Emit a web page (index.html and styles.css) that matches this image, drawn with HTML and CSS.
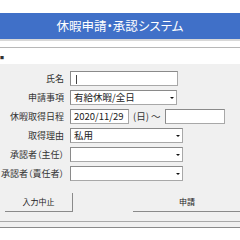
FILE: index.html
```html
<!DOCTYPE html>
<html lang="ja">
<head>
<meta charset="utf-8">
<link rel="stylesheet" href="styles.css">
</head>
<body>
<div class="page">
  <div class="topgap"></div>
  <div class="header"><span class="title">休暇申請・承認システム</span></div>
  <div class="band">
    <div class="band-line"></div>
    <div class="band-cap">■</div>
  </div>
  <div class="form">
    <div class="rows">
      <div class="label">氏名</div>
      <div class="field w108"><span class="caret"></span></div>

      <div class="label">申請事項</div>
      <div class="field w107 combo">有給休暇/全日<span class="arrow"></span></div>

      <div class="label">休暇取得日程</div>
      <div class="daterow">
        <div class="field w59">2020/11/29</div>
        <span class="dow">(日) 〜</span>
        <div class="field w60"></div>
      </div>

      <div class="label">取得理由</div>
      <div class="field w113 combo">私用<span class="arrow"></span></div>

      <div class="label">承認者<span class="paren">（</span>主任<span class="paren">）</span></div>
      <div class="field w113 combo"><span class="arrow"></span></div>

      <div class="label">承認者<span class="paren">（</span>責任者<span class="paren">）</span></div>
      <div class="field w113 combo"><span class="arrow"></span></div>
    </div>
    <div class="buttons">
      <div class="btn btn-cancel">入力中止</div>
      <div class="btn btn-submit">申請</div>
    </div>
  </div>
  <div class="bottom"></div>
</div>
</body>
</html>
```
FILE: styles.css
```css
html, body {
  margin: 0;
  padding: 0;
  background: #ffffff;
}
.page {
  width: 240px;
  height: 240px;
  overflow: hidden;
  font-family: "Noto Sans CJK JP", "Noto Sans", sans-serif;
  font-feature-settings: "palt";
  color: #222;
}
.topgap {
  height: 13px;
  background: #ffffff;
}
.header {
  height: 26px;
  background: #4070c8;
  display: flex;
  align-items: center;
  justify-content: center;
}
.title {
  color: #ffffff;
  font-size: 12.5px;
  line-height: 1;
}
.band {
  height: 25px;
  border-top: 2px solid #d8d8d8;
  background: #ffffff;
  box-sizing: border-box;
  padding-top: 6px;
}
.band-line {
  height: 0;
  border-top: 1px solid #b8b8b8;
}
.band-cap {
  font-size: 4px;
  line-height: 1;
  margin-top: 8px;
  color: #333;
}
.form {
  background: #f0f0f0;
  height: 158px;
  box-sizing: border-box;
  padding-top: 7px;
  border-bottom: 1px solid #a8a8a8;
}
.rows {
  display: grid;
  grid-template-columns: 64px 1fr;
  column-gap: 6px;
  row-gap: 4px;
}
.label {
  font-size: 9px;
  font-feature-settings: normal;
  line-height: 15px;
  text-align: right;
  color: #333;
  white-space: nowrap;
}
.paren {
  font-feature-settings: "palt";
}
.field {
  height: 15px;
  box-sizing: border-box;
  background: #ffffff;
  border: 1px solid #a8a8a8;
  border-top-color: #8a8a8a;
  border-left-color: #8a8a8a;
  font-size: 9.5px;
  line-height: 13px;
  padding-left: 3px;
  position: relative;
  color: #222;
  white-space: nowrap;
  flex: none;
}
.w108 { width: 108px; }
.w107 { width: 107px; }
.w113 { width: 113px; }
.w59 { width: 59px; }
.w60 { width: 60px; }
.caret {
  display: inline-block;
  width: 1px;
  height: 9px;
  background: #444;
  margin-left: 2px;
  vertical-align: middle;
}
.arrow {
  position: absolute;
  right: 2px;
  top: 6px;
  width: 0;
  height: 0;
  border-left: 2px solid transparent;
  border-right: 2px solid transparent;
  border-top: 2px solid #111;
}
.daterow {
  display: flex;
  align-items: center;
  white-space: nowrap;
}
.dow {
  font-size: 9.5px;
  line-height: 15px;
  color: #333;
  margin-left: 4px;
  margin-right: 4px;
  white-space: nowrap;
  flex: none;
}
.buttons {
  display: flex;
  justify-content: space-between;
  margin-top: 12px;
  padding-left: 5px;
  margin-right: -2px;
}
.btn {
  height: 19px;
  box-sizing: border-box;
  font-size: 8px;
  line-height: 18px;
  text-align: center;
  color: #222;
  background: #f0f0f0;
  border-right: 1px solid #8a8a8a;
  border-bottom: 1px solid #8a8a8a;
}
.btn-cancel { width: 68px; }
.btn-submit { width: 109px; }
.bottom {
  height: 5px;
  background: #f0f0f0;
  border-bottom: 1px solid #8a8a8a;
}
```
